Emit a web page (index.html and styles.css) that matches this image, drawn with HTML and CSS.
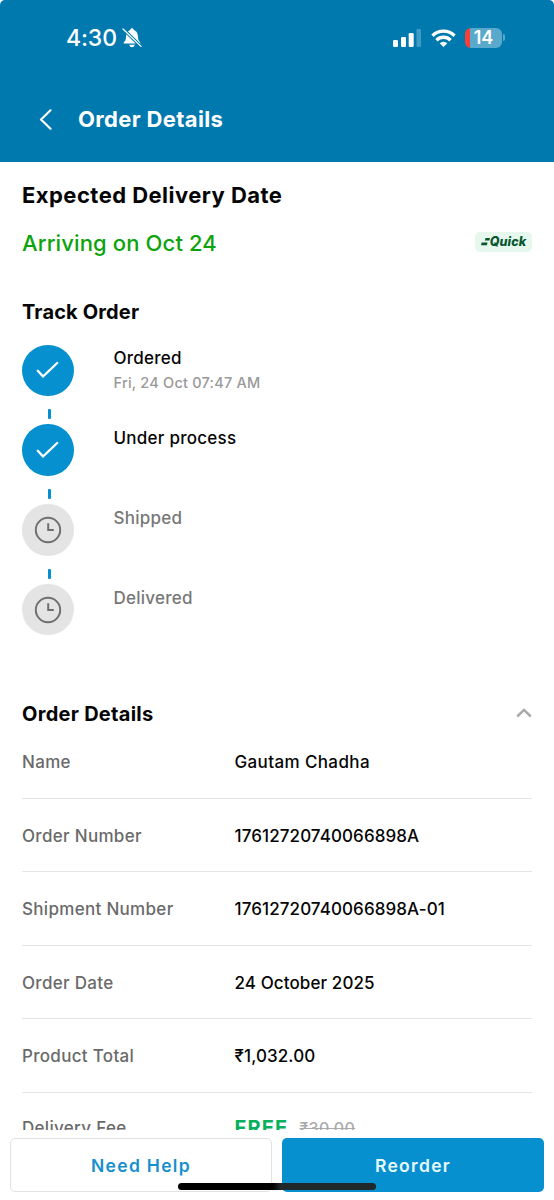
FILE: index.html
```html
<!DOCTYPE html>
<html lang="en">
<head>
<meta charset="utf-8">
<title>Order Details</title>
<link rel="stylesheet" href="styles.css">
</head>
<body>
<div class="phone">
  <header class="header">
    <div class="status">
      <span class="time">4:30</span>
      <svg class="bell" width="20" height="20" viewBox="0 0 20 20">
        <path fill="#fff" d="M1.500 15.400c0-1.200 2-2.400 2.300-4.500l.3-3.200C4.500 4.200 6.500 2.400 8.200 1.900 8.400.8 9.200.2 10 .2s1.600.6 1.800 1.700c2 .5 3.700 2.300 4.100 5.800l.3 3.200c.3 2.100 2.300 3.300 2.300 4.500zM7.200 16.700h5.600c-.4 1.700-1.600 2.500-2.800 2.500s-2.400-.8-2.800-2.500z"/>
        <path stroke="#0079af" stroke-width="3.200" d="M1 .8l18 17.800"/>
        <path stroke="#fff" stroke-width="1.300" stroke-linecap="round" d="M1 1l18 17.400"/>
      </svg>
      <svg class="signal" width="28" height="18" viewBox="0 0 28 18" fill="#fff">
        <rect x="0" y="11" width="5" height="7" rx="1.300"/><rect x="8" y="8" width="5" height="10" rx="1.300"/><rect x="15.700" y="4" width="5" height="14" rx="1.300"/><rect x="23.500" y="0" width="4.500" height="18" rx="1.300" opacity=".25"/>
      </svg>
      <svg class="wifi" width="25" height="18" viewBox="0 0 25 18" fill="none" stroke="#fff" stroke-width="3.400">
        <path d="M1.500 6.700a15.600 15.600 0 0 1 22 0"/><path d="M5.400 11.200a10.100 10.100 0 0 1 14.200 0"/><path fill="#fff" stroke="none" d="M12.500 18l-3.800-3.700a5.500 5.500 0 0 1 7.600 0z"/>
      </svg>
      <div class="battery"><span class="level">14</span></div>
      <i class="nub"></i>
    </div>
    <div class="titlebar">
      <svg width="13" height="21" viewBox="0 0 13 21" fill="none" stroke="#fff" stroke-width="2.200" stroke-linecap="round" stroke-linejoin="round"><path d="M11.500 1.300L2 10.500l9.500 9.200"/></svg>
      <h1 class="title">Order Details</h1>
    </div>
  </header>
  <main class="content">
    <h2 class="expected">Expected Delivery Date</h2>
    <div class="arrival">
      <span class="arriving">Arriving on Oct 24</span>
      <span class="quick"><svg width="9" height="8" viewBox="0 0 9 8" fill="#07552f"><path d="M4.600 0H9L8.400 2.600H3.800zM.7 4.600h5.800L5.900 7.200H0z"/></svg><b class="quick-text">Quick</b></span>
    </div>
    <h3 class="section track">Track Order</h3>
    <ol class="steps">
      <li class="step done"><span class="dot"><svg width="24" height="20" viewBox="0 0 24 20"><path d="M1.800 10.800l5.200 5.700L21.200 3"/></svg></span><div><p class="step-name">Ordered</p><p class="step-time">Fri, 24 Oct 07:47 AM</p></div></li>
      <li class="step done"><span class="dot"><svg width="24" height="20" viewBox="0 0 24 20"><path d="M1.800 10.800l5.200 5.700L21.200 3"/></svg></span><p class="step-name">Under process</p></li>
      <li class="step"><span class="dot"><svg width="28" height="28" viewBox="0 0 28 28"><circle cx="14" cy="14" r="12.200"/><path d="M14.200 7.200v6.800h5.600"/></svg></span><p class="step-name">Shipped</p></li>
      <li class="step"><span class="dot"><svg width="28" height="28" viewBox="0 0 28 28"><circle cx="14" cy="14" r="12.200"/><path d="M14.200 7.200v6.800h5.600"/></svg></span><p class="step-name">Delivered</p></li>
    </ol>
    <div class="details-head">
      <h3 class="section details">Order Details</h3>
      <svg width="16" height="10" viewBox="0 0 16 10" fill="none" stroke="#aaa" stroke-width="2.500"><path d="M1.200 8.500L8 1.900 14.800 8.500"/></svg>
    </div>
    <dl class="rows">
      <div class="row"><dt>Name</dt><dd class="name">Gautam Chadha</dd></div>
      <div class="row"><dt>Order Number</dt><dd class="num">17612720740066898A</dd></div>
      <div class="row"><dt>Shipment Number</dt><dd class="num">17612720740066898A-01</dd></div>
      <div class="row"><dt>Order Date</dt><dd class="num">24 October 2025</dd></div>
      <div class="row"><dt>Product Total</dt><dd class="num">₹1,032.00</dd></div>
      <div class="row"><dt>Delivery Fee</dt><dd class="fee"><b class="free">FREE</b><s class="old">₹30.00</s></dd></div>
    </dl>
  </main>
  <footer class="footer">
    <button class="btn help">Need Help</button>
    <button class="btn reorder">Reorder</button>
    <i class="home"></i>
  </footer>
</div>
</body>
</html>
```
FILE: styles.css
```css
* { box-sizing: border-box; }
body { margin: 0; background: #fff; font-family: Inter, "Liberation Sans", sans-serif; color: #050505; }
h1, h2, h3, p, ol, dl, dd { margin: 0; padding: 0; }
svg { display: block; flex: none; }
.phone { width: 554px; height: 1200px; display: flex; flex-direction: column; overflow: hidden; }
.header { height: 162px; flex: none; background: #0079af; border-radius: 5px 5px 0 0; color: #fff; }
.status { height: 75px; display: flex; align-items: center; padding: 0 49px 0 66px; }
.time { font-size: 23px; font-weight: 500; letter-spacing: -0.1px; width: 56px; white-space: nowrap; }
.signal { margin-left: auto; margin-right: 10px; }
.wifi { margin-right: 9px; }
.battery { width: 37px; height: 20px; border-radius: 6px; background: linear-gradient(90deg, #fb3e36 5px, #59a9cc 5px); display: flex; align-items: center; justify-content: center; }
.level { font-size: 18px; line-height: 20px; font-weight: 600; }
.nub { width: 2px; height: 7px; margin-left: 1px; border-radius: 0 3px 3px 0; background: #59a9cc; }
.titlebar { height: 88px; display: flex; align-items: center; gap: 26px; padding-left: 39px; }
.title { font-size: 22px; font-weight: 650; letter-spacing: 0.350px; }
.content { height: 968px; flex: none; overflow: hidden; padding: 18px 22px 0; }
.expected { font-size: 22px; line-height: 30px; font-weight: 650; letter-spacing: 0.460px; white-space: nowrap; }
.arrival { height: 30px; margin-top: 17px; display: flex; align-items: center; justify-content: space-between; }
.arriving { padding-top: 1px; font-size: 22px; font-weight: 500; color: #0ca30c; letter-spacing: 0.130px; }
.quick { width: 57px; height: 20px; border-radius: 5px; background: #e6f7ee; display: flex; align-items: center; justify-content: center; color: #07552f; }
.quick-text { font-size: 12.500px; line-height: 20px; font-weight: 800; font-style: italic; letter-spacing: 0.100px; }
.section { font-size: 20px; line-height: 26px; font-weight: 650; white-space: nowrap; }
.track { margin-top: 42px; letter-spacing: 0.150px; }
.details { padding-top: 1px; letter-spacing: 0.280px; }
.steps { list-style: none; margin-top: 19.500px; }
.step { position: relative; height: 79.800px; display: flex; align-items: flex-start; gap: 40px; color: #777; }
.dot { width: 51.500px; height: 51.500px; border-radius: 50%; background: #e4e4e4; display: flex; align-items: center; justify-content: center; flex: none; }
.dot svg { fill: none; stroke: #707070; stroke-width: 2; }
.done { color: #050505; }
.done .dot { background: #0790cf; }
.done .dot svg { stroke: #fff; stroke-width: 2.400; stroke-linecap: round; stroke-linejoin: round; }
.step:not(:last-child)::after { content: ""; position: absolute; left: 25.500px; top: 64.500px; width: 3px; height: 10px; border-radius: 1px; background: #0790cf; }
.step-name { padding-top: 0.800px; font-size: 17px; line-height: 26px; font-weight: 500; letter-spacing: 0.250px; }
.step-time { font-size: 14.500px; line-height: 24px; font-weight: 500; color: #999; letter-spacing: 0.220px; }
.details-head { display: flex; align-items: center; justify-content: space-between; height: 26px; margin-top: 36.800px; }
.rows { margin-top: -1.100px; }
.row { height: 73.450px; display: flex; align-items: center; padding-top: 1.500px; border-bottom: 1.500px solid #e5e5e5; font-size: 17px; font-weight: 500; }
.row:last-child { padding-top: 0; padding-bottom: 1px; }
.row dt { width: 212.500px; color: #6a6a6a; letter-spacing: 0.310px; }
.name { letter-spacing: 0.380px; }
.num { letter-spacing: 0.100px; }
.fee { display: flex; align-items: center; gap: 11px; }
.free { font-size: 20px; font-weight: 700; color: #06b05c; letter-spacing: 1.200px; }
.old { font-size: 16px; color: #aaa; font-weight: 500; letter-spacing: 0.300px; }
.footer { position: relative; height: 70px; flex: none; display: flex; gap: 10px; padding: 8px 10px; background: #fff; }
.btn { width: 262px; flex: none; height: 54px; padding: 0; border-radius: 5px; font: 600 17.500px Inter, sans-serif; letter-spacing: 1.300px; }
.help { border: 1.500px solid #e2e2e2; background: #fff; color: #168fcb; }
.reorder { border: 0; background: #0790cf; color: #e8faff; }
.home { position: absolute; left: 178px; top: 53px; width: 198px; height: 6.500px; border-radius: 4px; background: linear-gradient(90deg, #000 48%, #20282c 52%); }
```
